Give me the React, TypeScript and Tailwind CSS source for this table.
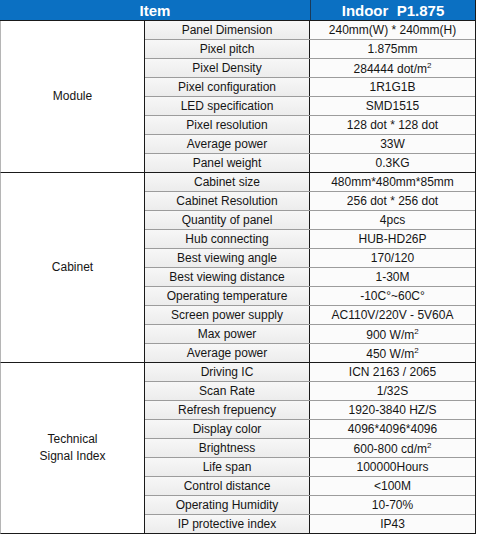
import React from "react";

type Row = { name: string; value: React.ReactNode };
type Group = { label: React.ReactNode; rows: Row[] };

const sq = (base: string) => (
  <span>
    {base}
    <span className="text-[8px] align-[5px]">2</span>
  </span>
);

const groups: Group[] = [
  {
    label: "Module",
    rows: [
      { name: "Panel Dimension", value: "240mm(W) * 240mm(H)" },
      { name: "Pixel pitch", value: "1.875mm" },
      { name: "Pixel Density", value: sq("284444 dot/m") },
      { name: "Pixel configuration", value: "1R1G1B" },
      { name: "LED specification", value: "SMD1515" },
      { name: "Pixel resolution", value: "128 dot * 128 dot" },
      { name: "Average power", value: "33W" },
      { name: "Panel weight", value: "0.3KG" },
    ],
  },
  {
    label: "Cabinet",
    rows: [
      { name: "Cabinet size", value: "480mm*480mm*85mm" },
      { name: "Cabinet Resolution", value: "256 dot * 256 dot" },
      { name: "Quantity of panel", value: "4pcs" },
      { name: "Hub connecting", value: "HUB-HD26P" },
      { name: "Best viewing angle", value: "170/120" },
      { name: "Best viewing distance", value: "1-30M" },
      { name: "Operating temperature", value: "-10C°~60C°" },
      { name: "Screen power supply", value: "AC110V/220V - 5V60A" },
      { name: "Max power", value: sq("900 W/m") },
      { name: "Average power", value: sq("450 W/m") },
    ],
  },
  {
    label: (
      <>
        Technical
        <br />
        Signal Index
      </>
    ),
    rows: [
      { name: "Driving IC", value: "ICN 2163 / 2065" },
      { name: "Scan Rate", value: "1/32S" },
      { name: "Refresh frepuency", value: "1920-3840 HZ/S" },
      { name: "Display color", value: "4096*4096*4096" },
      { name: "Brightness", value: sq("600-800 cd/m") },
      { name: "Life span", value: "100000Hours" },
      { name: "Control distance", value: "<100M" },
      { name: "Operating Humidity", value: "10-70%" },
      { name: "IP protective index", value: "IP43" },
    ],
  },
];

export default function App() {
  return (
    <div
      className="w-[477px] h-[535px] bg-white text-[#151515] text-[12px] leading-none"
      style={{ fontFamily: '"Liberation Sans", Arial, sans-serif' }}
    >
      <div className="w-[476px] border-r border-[#1a1a1a]">
        {/* header */}
        <div className="flex h-[21px] bg-[#0b70c2] text-white font-bold text-[15px] border-b border-[#1a1a1a]">
          <div className="w-[311px] border-r border-[#1a3a5a] flex items-center justify-center">Item</div>
          <div className="flex-1 flex items-center justify-center">Indoor&nbsp; P1.875</div>
        </div>

        {groups.map((g, gi) => (
          <div key={gi} className="flex border-b border-[#1a1a1a] border-l border-l-[#b5b5b5]">
            <div className="w-[144px] border-r border-[#1a1a1a] flex items-center justify-center text-center leading-[17px]">
              {g.label}
            </div>
            <div className="flex-1 flex flex-col">
              {g.rows.map((r, ri) => (
                <div
                  key={ri}
                  className={
                    "flex " +
                    (ri < g.rows.length - 1 ? "h-[19px] border-b border-[#9c9c9c]" : "h-[18px]")
                  }
                >
                  <div className="w-[165px] border-r border-[#1a1a1a] bg-gradient-to-b from-[#f7f7f7] to-[#ececec] flex items-center justify-center whitespace-nowrap">
                    {r.name}
                  </div>
                  <div className="flex-1 flex items-center justify-center whitespace-nowrap bg-[#fbfbfb]">
                    {r.value}
                  </div>
                </div>
              ))}
            </div>
          </div>
        ))}
      </div>
    </div>
  );
}
